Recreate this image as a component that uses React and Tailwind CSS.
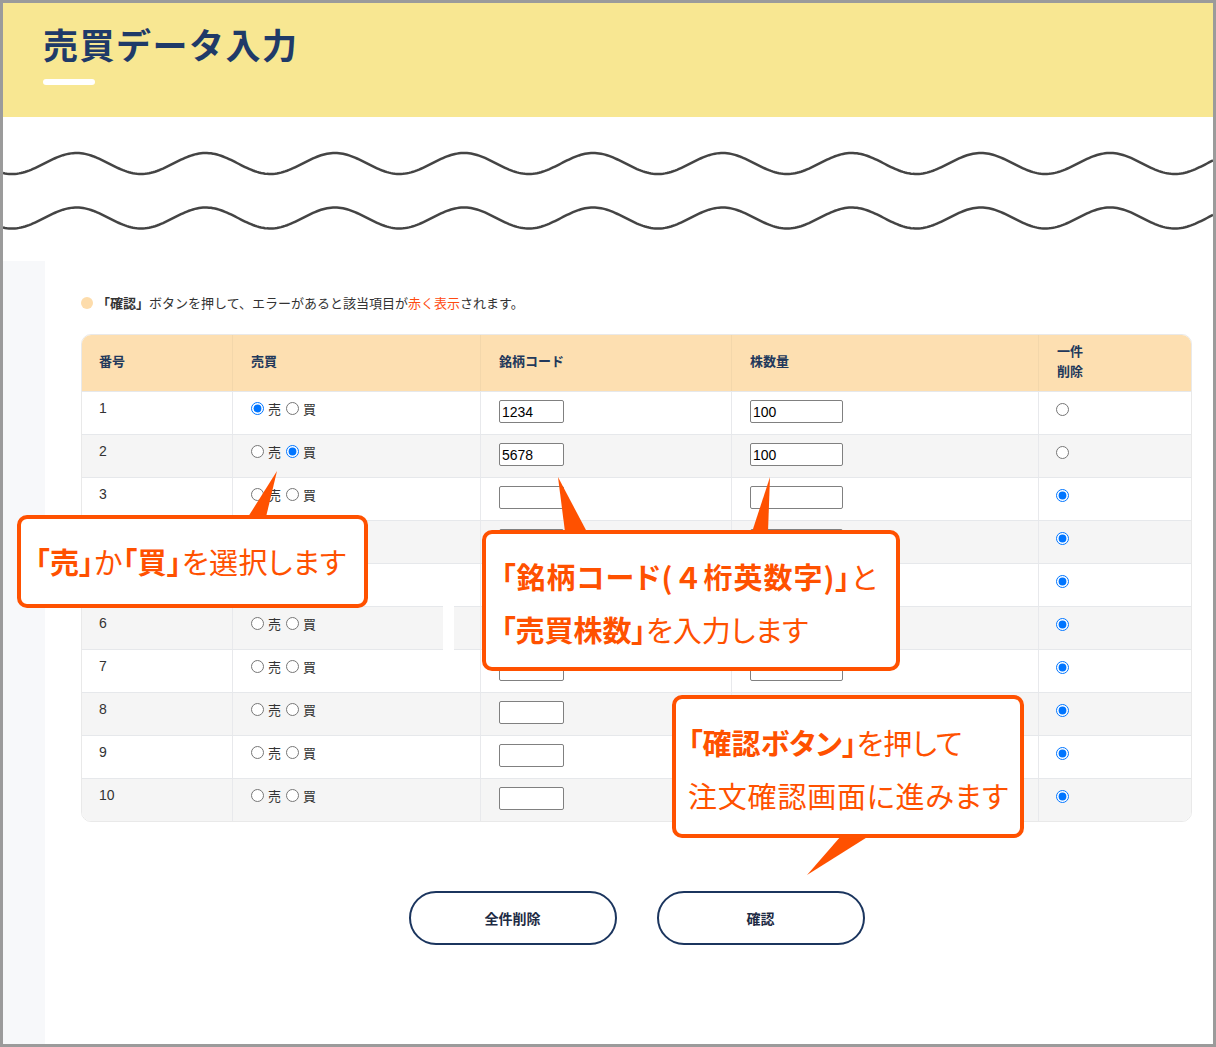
import React from "react";

const rows = [
  { n: 1, side: "sell", code: "1234", qty: "100", del: false },
  { n: 2, side: "buy", code: "5678", qty: "100", del: false },
  { n: 3, side: null, code: "", qty: "", del: true },
  { n: 4, side: null, code: "", qty: "", del: true },
  { n: 5, side: null, code: "", qty: "", del: true },
  { n: 6, side: null, code: "", qty: "", del: true },
  { n: 7, side: null, code: "", qty: "", del: true },
  { n: 8, side: null, code: "", qty: "", del: true },
  { n: 9, side: null, code: "", qty: "", del: true },
  { n: 10, side: null, code: "", qty: "", del: true },
];

// sine wave drawn as a polyline
function wavePath(cy) {
  let d = "";
  for (let x = 0; x <= 1210; x += 2) {
    const y = cy - 10.5 * Math.cos((2 * Math.PI * (x - 73.5)) / 129.2);
    d += (x === 0 ? "M" : "L") + x + " " + y.toFixed(2) + " ";
  }
  return d;
}

function Radio({ name, checked }) {
  return (
    <input
      type="radio"
      name={name}
      defaultChecked={checked}
      className="m-0 w-[13px] h-[13px] shrink-0"
    />
  );
}

export default function App() {
  return (
    <div className="w-[1216px] h-[1047px] bg-[#9b9b9b] p-[3px] overflow-hidden font-['Noto_Sans_CJK_JP',sans-serif]">
      <div className="relative w-full h-full bg-white flex flex-col">
        {/* header */}
        <div className="h-[114px] shrink-0 bg-[#f8e792] pl-[40px] pt-[19px]">
          <h1 className="text-[35px] leading-[44px] font-bold tracking-[1.5px] text-[#1f3a68]">
            売買データ入力
          </h1>
          <div className="mt-[13px] w-[52px] h-[6px] rounded-full bg-white"></div>
        </div>

        {/* waves */}
        <div className="h-[144px] shrink-0">
          <svg width="1210" height="144" viewBox="0 0 1210 144">
            <path d={wavePath(46.5)} fill="none" stroke="#444" strokeWidth="2.5" />
            <path d={wavePath(101)} fill="none" stroke="#444" strokeWidth="2.5" />
          </svg>
        </div>

        {/* main */}
        <div className="flex-1 flex">
          <div className="w-[42px] shrink-0 bg-[#f7f8fa]"></div>
          <div className="flex-1 pl-[36px] pr-[21px] pt-[32px]">
            <div className="flex items-center h-[20px] text-[13px] text-[#333]">
              <span className="w-[12px] h-[12px] rounded-full bg-[#fddcab] mr-[4px]"></span>
              <span>
                <span className="font-bold">「確認」</span>ボタンを押して、エラーがあると該当項目が
                <span className="text-[#ff4a10]">赤く表示</span>されます。
              </span>
            </div>

            <div className="mt-[21px] w-[1111px] rounded-[10px] overflow-hidden border border-[#e9e9e9]">
              <div className="grid grid-cols-[150px_248px_251px_307px_153px] h-[56px] bg-[#fddfb1] text-[13px] font-bold text-[#22385b]">
                <div className="flex items-center pl-[17px] pb-[4px]">番号</div>
                <div className="flex items-center pl-[18px] pb-[4px] border-l border-[#f3d7ab]">売買</div>
                <div className="flex items-center pl-[18px] pb-[4px] border-l border-[#f3d7ab]">銘柄コード</div>
                <div className="flex items-center pl-[18px] pb-[4px] border-l border-[#f3d7ab]">株数量</div>
                <div className="flex items-center pl-[18px] pb-[4px] border-l border-[#f3d7ab] leading-[20px]">
                  一件
                  <br />
                  削除
                </div>
              </div>
              {rows.map((r) => (
                <div
                  key={r.n}
                  className={`grid grid-cols-[150px_248px_251px_307px_153px] h-[43px] border-t border-[#e6e8eb] text-[13px] text-[#333] ${
                    r.n % 2 === 0 ? "bg-[#f5f5f5]" : "bg-white"
                  }`}
                >
                  <div className="pl-[17px] pt-[8px] leading-[17px] font-['Liberation_Sans',sans-serif] text-[14px]">
                    {r.n}
                  </div>
                  <div className="pl-[18px] pt-[8px] border-l border-[#e8e9ec]">
                    <div className="flex items-center h-[17px]">
                      <Radio name={`side${r.n}`} checked={r.side === "sell"} />
                      <span className="ml-[4px]">売</span>
                      <span className="ml-[5px] flex items-center">
                        <Radio name={`side${r.n}`} checked={r.side === "buy"} />
                      </span>
                      <span className="ml-[4px]">買</span>
                    </div>
                  </div>
                  <div className="pl-[18px] pt-[8px] border-l border-[#e8e9ec]">
                    <input
                      type="text"
                      defaultValue={r.code}
                      className="w-[65px] h-[23px] border border-[#808080] rounded-[2px] bg-white px-[2px] text-[14px] text-black font-['Liberation_Sans',sans-serif]"
                    />
                  </div>
                  <div className="pl-[18px] pt-[8px] border-l border-[#e8e9ec]">
                    <input
                      type="text"
                      defaultValue={r.qty}
                      className="w-[93px] h-[23px] border border-[#808080] rounded-[2px] bg-white px-[2px] text-[14px] text-black font-['Liberation_Sans',sans-serif]"
                    />
                  </div>
                  <div className="pl-[17px] pt-[9px] border-l border-[#e8e9ec]">
                    <Radio name={`del${r.n}`} checked={r.del} />
                  </div>
                </div>
              ))}
            </div>

            <div className="mt-[69px] w-[1111px] flex justify-center gap-[40px]">
              <button className="w-[208px] h-[54px] rounded-full border-[2.5px] border-[#1b355e] bg-white text-[14px] font-bold text-[#1e2b44]">
                全件削除
              </button>
              <button className="w-[208px] h-[54px] rounded-full border-[2.5px] border-[#1b355e] bg-white text-[14px] font-bold text-[#1e2b44]">
                確認
              </button>
            </div>
          </div>
        </div>

        {/* leftover white strip in the capture */}
        <div className="absolute left-[440px] top-[603px] w-[11px] h-[86px] bg-white"></div>

        {/* callouts */}
        <div className="absolute left-[14px] top-[512px] w-[351px] h-[93px] rounded-[10px] border-[4px] border-[#ff5100] bg-white flex items-center pl-[14px] text-[29px] tracking-[0.4px] text-[#ff5100] [font-feature-settings:'palt'] whitespace-nowrap">
          <span className="font-bold">「売」</span>
          <span>か</span>
          <span className="font-bold">「買」</span>
          <span>を選択します</span>
        </div>

        <div className="absolute left-[479px] top-[527px] w-[418px] h-[141px] rounded-[10px] border-[4px] border-[#ff5100] bg-white flex flex-col justify-center pl-[15px] pt-[4px] text-[29px] leading-[53px] text-[#ff5100] [font-feature-settings:'palt'] whitespace-nowrap">
          <div className="tracking-[1px]">
            <span className="font-bold">
              「銘柄コード(<span className="[font-feature-settings:normal]">４</span>桁英数字)」
            </span>
            <span>と</span>
          </div>
          <div>
            <span className="font-bold">「売買株数」</span>
            <span>を入力します</span>
          </div>
        </div>

        <div className="absolute left-[669px] top-[692px] w-[352px] h-[143px] rounded-[10px] border-[4px] border-[#ff5100] bg-white flex flex-col justify-center pl-[12px] pt-[4px] text-[29px] leading-[53px] text-[#ff5100] [font-feature-settings:'palt'] whitespace-nowrap">
          <div>
            <span className="font-bold">「確認ボタン」</span>
            <span>を押して</span>
          </div>
          <div className="tracking-[0.8px]">注文確認画面に進みます</div>
        </div>

        {/* callout tails */}
        <svg
          className="absolute left-0 top-0 pointer-events-none"
          width="1210"
          height="1041"
          viewBox="0 0 1210 1041"
        >
          <polygon points="245,514 263,514 274,468" fill="#ff5100" />
          <polygon points="555,474 562,529 584,529" fill="#ff5100" />
          <polygon points="767,474 749,529 765,529" fill="#ff5100" />
          <polygon points="838,833 866,833 804,872" fill="#ff5100" />
        </svg>
      </div>
    </div>
  );
}
